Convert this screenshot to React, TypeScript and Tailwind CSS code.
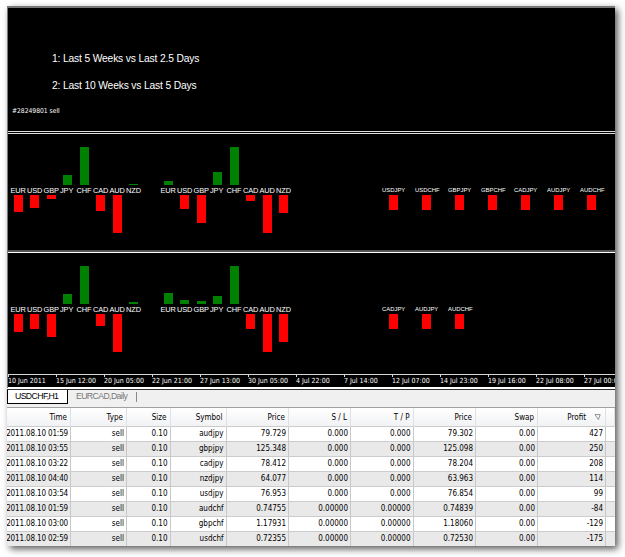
import React from 'react';

const CURRENCIES = ['EUR', 'USD', 'GBP', 'JPY', 'CHF', 'CAD', 'AUD', 'NZD'];

const FIRST = {
  short: [-17, -13, -4, 10, 38, -16, -38, 1],
  long: [4, -14, -28, 13, 38, -6, -38, -18],
  pairs: ['USDJPY', 'USDCHF', 'GBPJPY', 'GBPCHF', 'CADJPY', 'AUDJPY', 'AUDCHF'],
};

const SECOND = {
  short: [-18, -15, -23, 10, 38, -12, -38, 2],
  long: [11, 4, 3, 8, 38, -15, -38, -28],
  pairs: ['CADJPY', 'AUDJPY', 'AUDCHF'],
};

const DATES = [
  '10 Jun 2011', '15 Jun 12:00', '20 Jun 05:00', '22 Jun 21:00', '27 Jun 13:00', '30 Jun 05:00', '4 Jul 22:00',
  '7 Jul 14:00', '12 Jul 07:00', '14 Jul 23:00', '19 Jul 16:00', '22 Jul 08:00', '27 Jul 00:00',
];

const HEADERS = ['Time', 'Type', 'Size', 'Symbol', 'Price', 'S / L', 'T / P', 'Price', 'Swap', 'Profit', ''];

const ORDERS = [
  ['2011.08.10 01:59', 'sell', '0.10', 'audjpy', '79.729', '0.000', '0.000', '79.302', '0.00', '427'],
  ['2011.08.10 03:55', 'sell', '0.10', 'gbpjpy', '125.348', '0.000', '0.000', '125.098', '0.00', '250'],
  ['2011.08.10 03:22', 'sell', '0.10', 'cadjpy', '78.412', '0.000', '0.000', '78.204', '0.00', '208'],
  ['2011.08.10 04:40', 'sell', '0.10', 'nzdjpy', '64.077', '0.000', '0.000', '63.963', '0.00', '114'],
  ['2011.08.10 03:54', 'sell', '0.10', 'usdjpy', '76.953', '0.000', '0.000', '76.854', '0.00', '99'],
  ['2011.08.10 01:59', 'sell', '0.10', 'audchf', '0.74755', '0.00000', '0.00000', '0.74839', '0.00', '-84'],
  ['2011.08.10 03:00', 'sell', '0.10', 'gbpchf', '1.17931', '0.00000', '0.00000', '1.18060', '0.00', '-129'],
  ['2011.08.10 02:59', 'sell', '0.10', 'usdchf', '0.72355', '0.00000', '0.00000', '0.72530', '0.00', '-175'],
];

const GRID = 'grid grid-cols-[64px_56px_43.5px_56px_62.5px_62px_62.5px_62.5px_62px_68px_9px]';

const StrengthBars: React.FC<{ values: number[] }> = ({ values }) => (
  <div className="flex w-[150px] shrink-0">
    {CURRENCIES.map((name, i) => (
      <div key={name} className="flex w-[16.5px] shrink-0 flex-col">
        <div className="flex h-[38px] items-end pl-[3px]">
          {values[i] > 0 && (
            <div className="w-[9px] bg-[#008000]" style={{ height: values[i] }} />
          )}
        </div>
        <div className="h-[10px] text-[7.4px] leading-[11px] tracking-[-0.1px] whitespace-nowrap">{name}</div>
        <div className="h-[38px] pl-[3px]">
          {values[i] < 0 && (
            <div className="w-[9px] bg-[#ff0000]" style={{ height: -values[i] }} />
          )}
        </div>
      </div>
    ))}
  </div>
);

const StrengthPanel: React.FC<{ data: typeof FIRST }> = ({ data }) => (
  <div className="flex pl-[2.5px]">
    <StrengthBars values={data.short} />
    <StrengthBars values={data.long} />
    <div className="flex pt-[38px] pl-[71.5px]">
      {data.pairs.map((pair) => (
        <div key={pair} className="w-[33px] shrink-0">
          <div className="h-[10px] text-[5.9px] leading-[10px] whitespace-nowrap">{pair}</div>
          <div className="ml-[7px] h-[15px] w-[9px] bg-[#ff0000]" />
        </div>
      ))}
    </div>
  </div>
);

const TimeAxis: React.FC = () => (
  <div className="flex h-[13px] overflow-hidden border-t border-[#d8d8d8] font-['DejaVu_Sans_Condensed','Open_Sans',sans-serif] text-[7px] leading-[13px]">
    {DATES.map((date) => (
      <div key={date} className="relative w-[48px] shrink-0 whitespace-nowrap">
        <div className="absolute top-0 left-0 h-[2px] w-px bg-[#d8d8d8]" />
        {date}
      </div>
    ))}
  </div>
);

const ChartTabs: React.FC = () => (
  <div className="flex h-[18px] border-t border-[#303030] bg-[#f0f0f0] font-['Liberation_Sans',sans-serif] text-[8.7px] leading-[13px] tracking-[-0.6px] text-[#777]">
    <div className="h-[14px] w-[61px] border-r border-b border-l border-black bg-white pl-[7px] text-black">
      USDCHF,H1
    </div>
    <div className="ml-[8px] w-[60px]">EURCAD,Daily</div>
    <div className="mt-[2px] h-[10px] w-px bg-[#888]" />
  </div>
);

const OrdersTable: React.FC = () => (
  <div className="bg-white font-['DejaVu_Sans_Condensed','Open_Sans',sans-serif] text-[8px] text-black">
    <div className={`${GRID} h-[19px] border-t border-[#a0a0a0] bg-linear-to-b from-white to-[#f1f2f4] leading-[19px]`}>
      {HEADERS.map((title, i) => (
        <div key={i} className="flex justify-end border-r border-[#dfe1e5] pr-[3px]">
          {title}
          {title === 'Profit' && (
            <svg className="mt-[6px] mr-px ml-[8px]" width="7" height="7" viewBox="0 0 7 7" fill="none" stroke="#777" strokeWidth="0.8">
              <path d="M1 .6H6.2L4.4 5.6L1 .6" />
            </svg>
          )}
        </div>
      ))}
    </div>
    {ORDERS.map((order, row) => (
      <div key={row} className={`${GRID} h-[15px] border-t border-[#cccccc] leading-[14px] ${row % 2 ? 'bg-[#e9e9e9]' : 'bg-white'}`}>
        {order.map((value, i) => (
          <div key={i} className={`flex justify-end border-r border-[#c8c8c8] pr-[2px] whitespace-nowrap ${i === 0 ? 'tracking-[-0.15px]' : ''}`}>
            {value}
          </div>
        ))}
      </div>
    ))}
  </div>
);

export default function App() {
  return (
    <div className="h-[557px] w-[625px] overflow-hidden bg-white pt-[6px] pl-[7px]">
      <div className="h-[540px] w-[608px] overflow-hidden shadow-[3px_3px_7px_0px_rgba(0,0,0,0.65)]">
        <div className="h-[382px] overflow-hidden border-t-2 border-l border-[#777] bg-black font-['Liberation_Sans',sans-serif] text-white">
          <div className="h-[123px] pt-[44px] text-[10.3px] leading-[14px] tracking-[-0.17px]">
            <p className="pl-[44px]">1: Last 5 Weeks vs Last 2.5 Days</p>
            <p className="mt-[13px] pl-[44px]">2: Last 10 Weeks vs Last 5 Days</p>
            <p className="mt-[13px] pl-[4px] font-['DejaVu_Sans_Condensed','Open_Sans',sans-serif] text-[6.7px] leading-[11px] tracking-normal">#28249801 sell</p>
          </div>
          <div className="h-[3px] border-y border-[#dddddd]" />
          <div className="h-[116px] pt-[13px]">
            <StrengthPanel data={FIRST} />
          </div>
          <div className="h-[3px] border-b border-white bg-[#555]" />
          <div className="h-[121px] pt-[13px]">
            <StrengthPanel data={SECOND} />
          </div>
          <TimeAxis />
          <div className="h-[1px] bg-white" />
        </div>
        <div className="h-px bg-white" />
        <ChartTabs />
        <OrdersTable />
      </div>
    </div>
  );
}
